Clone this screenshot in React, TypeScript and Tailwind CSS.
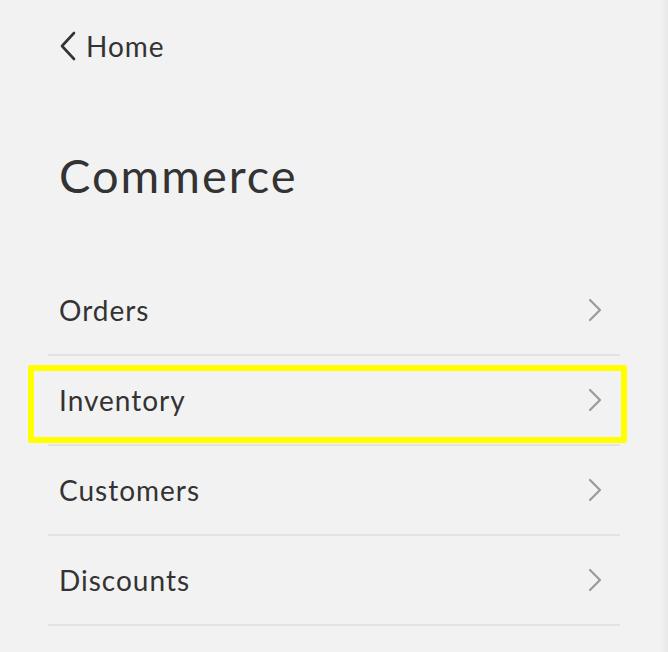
import React from "react";

const items = ["Orders", "Inventory", "Customers", "Discounts"];

function ChevronRight() {
  return (
    <svg width="14" height="24" viewBox="0 0 14 24" fill="none" className="shrink-0">
      <path d="M2 2 L12 12 L2 22" stroke="#9a9a9a" strokeWidth="2.2" strokeLinecap="round" strokeLinejoin="round" />
    </svg>
  );
}

export default function App() {
  return (
    <div
      className="min-h-[652px] bg-[#f2f2f2] flex text-[#333333]"
      style={{ fontFamily: "Lato, 'Open Sans', sans-serif" }}
    >
      <div className="flex-1 pl-[48px] pr-[40px]">
        <div className="pt-[31px] pl-[11px] flex items-center gap-[9px] h-[61px]">
          <svg width="18" height="30" viewBox="0 0 18 30" fill="none" className="shrink-0">
            <path d="M15 2 L3 15 L15 28" stroke="#333333" strokeWidth="2.6" strokeLinecap="round" strokeLinejoin="round" />
          </svg>
          <span className="text-[28px] leading-none tracking-[1px]">Home</span>
        </div>
        <h1 className="pl-[11px] mt-[91px] text-[47px] leading-none font-normal tracking-[2px]">Commerce</h1>
        <ul className="mt-[67px]">
          {items.map((label) => (
            <li key={label} className="relative h-[90px] flex items-center justify-between pl-[11px] pr-[18px] border-b-2 border-[#e3e3e3]">
              <span className="text-[28px] leading-none tracking-[1px]">{label}</span>
              <ChevronRight />
              {label === "Inventory" && (
                <div className="absolute left-[-20px] right-[-7px] top-[9px] bottom-[1px] border-[6px] border-[#ffff00] rounded-[3px] pointer-events-none" />
              )}
            </li>
          ))}
        </ul>
      </div>
      <div className="w-[8px] bg-gradient-to-r from-[#f2f2f2] to-[#e8e8e8]" />
    </div>
  );
}
